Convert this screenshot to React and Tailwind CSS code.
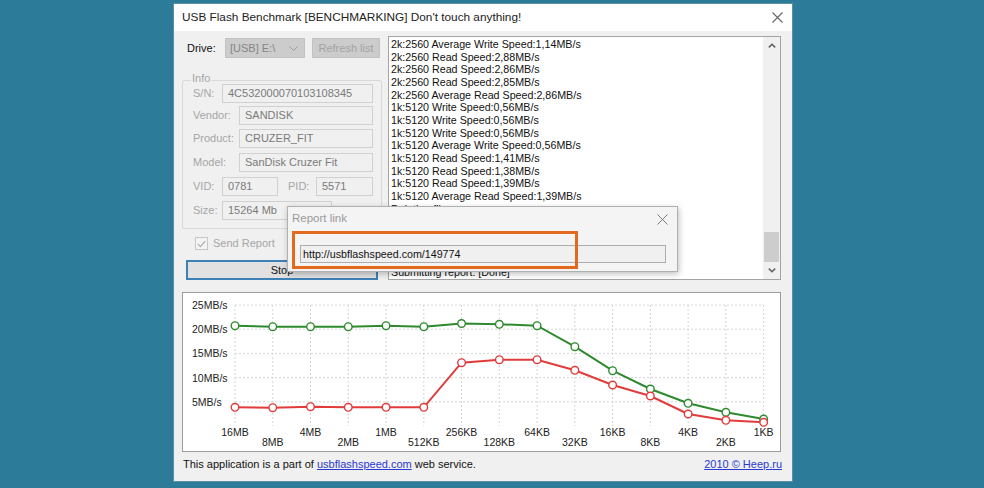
import React from 'react';

const FONT = { fontFamily: '"Liberation Sans", Arial, sans-serif' };

const logLines = [
    '2k:2560 Average Write Speed:1,14MB/s',
    '2k:2560 Read Speed:2,88MB/s',
    '2k:2560 Read Speed:2,86MB/s',
    '2k:2560 Read Speed:2,85MB/s',
    '2k:2560 Average Read Speed:2,86MB/s',
    '1k:5120 Write Speed:0,56MB/s',
    '1k:5120 Write Speed:0,56MB/s',
    '1k:5120 Write Speed:0,56MB/s',
    '1k:5120 Average Write Speed:0,56MB/s',
    '1k:5120 Read Speed:1,41MB/s',
    '1k:5120 Read Speed:1,38MB/s',
    '1k:5120 Read Speed:1,39MB/s',
    '1k:5120 Average Read Speed:1,39MB/s',
    'Deleting file...',
    'Benchmark finished',
    'Preparing report...',
    'Submitting report...',
    'Waiting for server...',
    'Submitting report: [Done]',
];

const sizes = ['16MB', '8MB', '4MB', '2MB', '1MB', '512KB', '256KB', '128KB', '64KB', '32KB', '16KB', '8KB', '4KB', '2KB', '1KB'];
const writeY = [32.7, 33.7, 33.7, 33.7, 32.7, 33.7, 30.5, 31.3, 32.7, 53.7, 77.7, 96, 110.3, 119.3, 126];
const readY = [114.3, 114.7, 113.7, 114.3, 114.3, 114.3, 69.7, 66.7, 66.7, 77.3, 92, 103, 121, 127.3, 129.3];
const px = (i) => 52 + i * 37.76;
const gridY = [12, 36.2, 60.4, 84.6, 108.8];
const yLabels = ['25MB/s', '20MB/s', '15MB/s', '10MB/s', '5MB/s'];

const Field = ({ w, value }) => (
    <div
        className="h-[19px] border border-[#d0d0d0] bg-[#f0f0f0] text-[#7a7a7a] pl-[5px] flex items-center leading-none"
        style={{ width: w }}
    >
        {value}
    </div>
);

const Chart = () => {
    const line = (ys) => ys.map((y, i) => `${px(i)},${y}`).join(' ');
    return (
        <svg width="597" height="158" className="block" style={FONT}>
            {gridY.map((y) => (
                <line key={y} x1={px(0)} x2={px(14)} y1={y} y2={y} stroke="#d6d6d6" strokeDasharray="2 2" />
            ))}
            {sizes.map((s, i) => (
                <line key={s} x1={px(i)} x2={px(i)} y1={12} y2={133} stroke="#d6d6d6" strokeDasharray="2 2" />
            ))}
            {yLabels.map((t, i) => (
                <text key={t} x={9} y={gridY[i] + 4} fontSize="10.5" fill="#222">{t}</text>
            ))}
            {sizes.map((s, i) => (
                <text key={s} x={px(i)} y={i % 2 === 0 ? 142.5 : 152.5} fontSize="10.5" fill="#222" textAnchor="middle">{s}</text>
            ))}
            <polyline points={line(writeY)} fill="none" stroke="#2f8a2f" strokeWidth="2" />
            <polyline points={line(readY)} fill="none" stroke="#e23b3b" strokeWidth="2" />
            {writeY.map((y, i) => (
                <circle key={'w' + i} cx={px(i)} cy={y} r="3.8" fill="#fff" stroke="#2f8a2f" strokeWidth="1.4" />
            ))}
            {readY.map((y, i) => (
                <circle key={'r' + i} cx={px(i)} cy={y} r="3.8" fill="#fff" stroke="#e23b3b" strokeWidth="1.4" />
            ))}
        </svg>
    );
};

const App = () => {
    return (
        <div className="w-[984px] h-[488px] bg-[#2b7b99] pt-[3px] pl-[173px] overflow-hidden" style={FONT}>
            <div className="relative w-[620px] h-[479px] border border-[#5b8fa6] bg-[#f0f0f0] flex flex-col text-[11px]">
                {/* title bar */}
                <div className="h-[27px] bg-white flex items-center justify-between pl-[8px] pr-[9px]">
                    <span className="text-[11.8px] text-[#222]">USB Flash Benchmark [BENCHMARKING] Don't touch anything!</span>
                    <svg width="11" height="11" viewBox="0 0 11 11">
                        <path d="M0.5 0.5 L10.5 10.5 M10.5 0.5 L0.5 10.5" stroke="#666" strokeWidth="1.1" />
                    </svg>
                </div>

                {/* top section */}
                <div className="flex pt-[5px] pl-[8px] gap-[5px]">
                    <div className="w-[201px] flex flex-col">
                        <div className="mt-[2px] h-[20px] flex items-center">
                            <span className="w-[43px] pl-[5px] text-[#111]">Drive:</span>
                            <div className="w-[80px] h-[20px] bg-[#cccccc] border border-[#c2c2c2] flex items-center justify-between pl-[4px] pr-[6px] text-[#858585]">
                                <span>[USB] E:\</span>
                                <svg width="9" height="5" viewBox="0 0 9 5">
                                    <path d="M0.5 0.5 L4.5 4.5 L8.5 0.5" fill="none" stroke="#9a9a9a" strokeWidth="1" />
                                </svg>
                            </div>
                            <div className="ml-[7px] w-[68px] h-[20px] bg-[#cccccc] border border-[#c2c2c2] flex items-center justify-center text-[#a3a3a3]">
                                Refresh list
                            </div>
                        </div>

                        <div className="relative mt-[22px] w-[200px] border border-[#d9d9d9] rounded-[2px] pt-[2px] pb-[8px] text-[#a6a6a6]">
                            <span className="absolute -top-[10px] left-[8px] px-[1px] bg-[#f0f0f0] leading-[14px]">Info</span>
                            <div className="mt-[1px] flex items-center">
                                <span className="w-[39px] pl-[10px]">S/N:</span>
                                <Field w={151} value="4C532000070103108345" />
                            </div>
                            <div className="mt-[3px] flex items-center">
                                <span className="w-[56px] pl-[10px]">Vendor:</span>
                                <Field w={134} value="SANDISK" />
                            </div>
                            <div className="mt-[4px] flex items-center">
                                <span className="w-[56px] pl-[10px]">Product:</span>
                                <Field w={134} value="CRUZER_FIT" />
                            </div>
                            <div className="mt-[5px] flex items-center">
                                <span className="w-[56px] pl-[10px]">Model:</span>
                                <Field w={134} value="SanDisk Cruzer Fit" />
                            </div>
                            <div className="mt-[5px] flex items-center">
                                <span className="w-[39px] pl-[10px]">VID:</span>
                                <Field w={56} value="0781" />
                                <span className="ml-[10px] w-[28px]">PID:</span>
                                <Field w={57} value="5571" />
                            </div>
                            <div className="mt-[5px] flex items-center">
                                <span className="w-[39px] pl-[10px]">Size:</span>
                                <Field w={110} value="15264 Mb" />
                            </div>
                        </div>

                        <div className="mt-[8px] h-[13px] flex items-center pl-[13px] text-[#a6a6a6]">
                            <div className="w-[13px] h-[13px] border border-[#c6c6c6] bg-[#f4f4f4] flex items-center justify-center">
                                <svg width="9" height="8" viewBox="0 0 9 8">
                                    <path d="M0.8 4 L3.4 6.6 L8.2 1" fill="none" stroke="#b3b3b3" strokeWidth="1.3" />
                                </svg>
                            </div>
                            <span className="ml-[5px]">Send Report</span>
                        </div>

                        <div className="mt-[10px] ml-[4px] w-[192px] h-[20px] border-2 border-[#3d80b6] bg-[#e1e1e1] flex items-center justify-center text-[#111]">
                            Stop
                        </div>
                    </div>

                    {/* log */}
                    <div className="w-[393px] h-[244px] border border-[#a4a4a4] bg-white flex">
                        <div className="flex-1 pl-[2px] pt-[1px] text-[10.7px] leading-[12.67px] text-[#111] overflow-hidden">
                            {logLines.map((l, i) => (
                                <div key={i} className="whitespace-nowrap">{l}</div>
                            ))}
                        </div>
                        <div className="w-[17px] bg-[#f0f0f0] flex flex-col items-center">
                            <div className="h-[17px] flex items-center justify-center">
                                <svg width="8" height="5" viewBox="0 0 8 5">
                                    <path d="M0.8 4.4 L4 1.2 L7.2 4.4" fill="none" stroke="#606060" strokeWidth="1.5" />
                                </svg>
                            </div>
                            <div className="flex-1" />
                            <div className="w-[15px] h-[30px] bg-[#cdcdcd]" />
                            <div className="h-[17px] flex items-center justify-center">
                                <svg width="8" height="5" viewBox="0 0 8 5">
                                    <path d="M0.8 0.6 L4 3.8 L7.2 0.6" fill="none" stroke="#606060" strokeWidth="1.5" />
                                </svg>
                            </div>
                        </div>
                    </div>
                </div>

                {/* chart */}
                <div className="mt-[12px] ml-[8px] w-[599px] h-[160px] border border-[#9c9c9c] bg-white">
                    <Chart />
                </div>

                {/* footer */}
                <div className="flex-1 flex items-start justify-between pt-[4px] pl-[9px] pr-[10px] text-[11px] text-[#111]">
                    <span>
                        This application is a part of{' '}
                        <span className="text-[#2a38d0] underline">usbflashspeed.com</span> web service.
                    </span>
                    <span className="text-[#2a38d0] underline">2010 © Heep.ru</span>
                </div>

                {/* report link dialog */}
                <div className="absolute left-[113px] top-[202px] w-[391px] h-[66px] bg-[#f4f4f4] border border-[#b0b0b0] shadow-[1px_2px_6px_rgba(0,0,0,0.25)]">
                    <div className="h-[24px] flex items-center justify-between pl-[4px] pr-[9px]">
                        <span className="text-[11.5px] text-[#9a9a9a]">Report link</span>
                        <svg width="11" height="11" viewBox="0 0 11 11">
                            <path d="M0.5 0.5 L10.5 10.5 M10.5 0.5 L0.5 10.5" stroke="#7a7a7a" strokeWidth="1" />
                        </svg>
                    </div>
                    <div className="mt-[14px] ml-[12px] w-[366px] h-[18px] bg-[#f0f0f0] border border-[#adadad] flex items-center pl-[2px] text-[10.7px] text-[#111]">
                        http://usbflashspeed.com/149774
                    </div>
                    <div className="absolute left-[4px] top-[24px] w-[286px] h-[38px] border-[3px] border-[#e2691e]" />
                </div>
            </div>
        </div>
    );
};

export default App;
